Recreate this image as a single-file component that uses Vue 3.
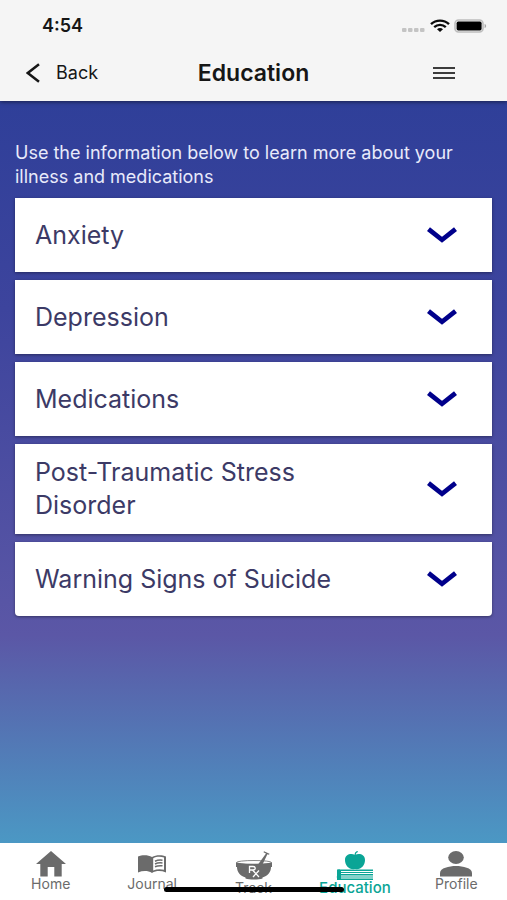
<script setup>
import { ref } from 'vue'

const topics = [
    { id: 'anxiety', title: 'Anxiety' },
    { id: 'depression', title: 'Depression' },
    { id: 'medications', title: 'Medications' },
    { id: 'ptsd', title: 'Post-Traumatic Stress Disorder' },
    { id: 'suicide', title: 'Warning Signs of Suicide' }
]

const tabs = [
    { id: 'home', label: 'Home' },
    { id: 'journal', label: 'Journal' },
    { id: 'track', label: 'Track' },
    { id: 'education', label: 'Education' },
    { id: 'profile', label: 'Profile' }
]

const activeTab = ref('education')
const openTopic = ref(null)

function toggleTopic(id) {
    openTopic.value = openTopic.value === id ? null : id
}
</script>

<template>
    <div class="app">
        <header class="header">
            <div class="status">
                <span class="time">4:54</span>
                <div class="status-icons" aria-hidden="true">
                    <svg width="24" height="14" viewBox="0 0 24 14" fill="#c4c4c4">
                        <rect x="0" y="9" width="4.5" height="4" rx="1" />
                        <rect x="6" y="9" width="4.5" height="4" rx="1" />
                        <rect x="12" y="9" width="4.5" height="4" rx="1" />
                        <rect x="18" y="9" width="4.5" height="4" rx="1" />
                    </svg>
                    <svg width="20" height="14" viewBox="0 0 20 14" fill="none" stroke="#0a0a0a">
                        <path d="M1 5.2C6 .4 14 .4 19 5.2" stroke-width="2.4" />
                        <path d="M4.2 8.2C7.4 5.2 12.6 5.2 15.8 8.2" stroke-width="2.3" />
                        <path d="M7 10.2C8.8 8.6 11.2 8.6 13 10.2L10 13z" fill="#0a0a0a" stroke="none" />
                    </svg>
                    <svg width="33" height="14" viewBox="0 0 33 14">
                        <rect x="1" y="1" width="28" height="12" rx="3.5" fill="#f5f5f5" stroke="#bdbdbd" stroke-width="1.6" />
                        <rect x="2.6" y="2.6" width="25" height="8.8" rx="1.6" fill="#000" />
                        <path d="M30.6 5v4c2-.5 2-3.5 0-4z" fill="#a8a8a8" />
                    </svg>
                </div>
            </div>
            <div class="toolbar">
                <button type="button" class="back">
                    <svg width="14" height="20" viewBox="0 0 14 20" fill="none" stroke="#161616" stroke-width="2.5"
                        aria-hidden="true">
                        <path d="M13 1.2L1.8 10L13 18.8" />
                    </svg>
                    Back
                </button>
                <h1>Education</h1>
                <button type="button" class="menu" aria-label="Menu">
                    <svg width="22" height="14" viewBox="0 0 22 14" stroke="#3c3c3c" stroke-width="2" aria-hidden="true">
                        <path d="M0 2h22M0 7h22M0 12h22" />
                    </svg>
                </button>
            </div>
        </header>

        <main class="content">
            <p class="intro">Use the information below to learn more about your illness and medications</p>
            <div class="topics">
                <button v-for="topic in topics" :key="topic.id" type="button" class="topic"
                    :class="{ open: openTopic === topic.id }" :aria-expanded="openTopic === topic.id"
                    @click="toggleTopic(topic.id)">
                    <span class="topic-title">{{ topic.title }}</span>
                    <svg class="chevron" width="30" height="16" viewBox="0 0 30 16" fill="none" stroke="#00008b"
                        stroke-width="4.8" aria-hidden="true">
                        <path d="M1.5 2.2L15 12.8L28.5 2.2" />
                    </svg>
                </button>
            </div>
        </main>

        <nav class="tabs" aria-label="Main">
            <a v-for="tab in tabs" :key="tab.id" :href="`#${tab.id}`" class="tab"
                :class="[tab.id, { active: activeTab === tab.id }]"
                :aria-current="activeTab === tab.id ? 'page' : undefined" @click="activeTab = tab.id">
                <svg v-if="tab.id === 'home'" width="30" height="26" viewBox="0 0 30 26" fill="currentColor"
                    aria-hidden="true">
                    <path d="M15 0L30 13H25.7V25.5H18.3V16H11.7V25.5H4.3V13H0z" />
                </svg>
                <svg v-else-if="tab.id === 'journal'" width="28" height="18" viewBox="0 0 28 18" aria-hidden="true">
                    <path d="M0 1.5C4-.4 10-.4 14 2C18-.4 24-.4 28 1.5V17.5C23 15.5 18 15.5 14 18C10 15.5 5 15.5 0 17.5z"
                        fill="currentColor" />
                    <path d="M15.2 3.2C18.5 1.6 22.5 1.5 26 2.6V14.8C22.5 13.8 18.5 14 15.2 15.5z" fill="#fff" />
                    <path d="M17 6.2C19.5 5 22 4.9 24.5 5.2M17 9C19.5 7.8 22 7.7 24.5 8M17 11.8C19.5 10.6 22 10.5 24.5 10.8"
                        fill="none" stroke="currentColor" stroke-width="1.5" />
                </svg>
                <svg v-else-if="tab.id === 'track'" width="38" height="30" viewBox="0 0 38 30" aria-hidden="true">
                    <ellipse cx="19" cy="11.5" rx="17.5" ry="2" fill="#fff" stroke="currentColor" stroke-width=".8" />
                    <path d="M23 13.5L31 2.6L28.5 1.3L29 .3L34.5 2.7L34 3.8L32.4 3.3L27.5 13.5z" fill="currentColor" />
                    <path d="M1 11.5C7 13.3 31 13.3 37 11.5V16H36C36 21.5 32.5 25 27.5 26.5V27.5C24 28.8 14 28.8 10.5 27.5V26.5C5.5 25 2 21.5 2 16H1z"
                        fill="currentColor" />
                    <path d="M14.5 22V15.5H18C21 15.5 21 19 18 19H14.5M17.5 19L24 26M24 19.5L18 26" fill="none"
                        stroke="#fff" stroke-width="1.3" />
                </svg>
                <svg v-else-if="tab.id === 'education'" width="38" height="30" viewBox="0 0 38 30" aria-hidden="true">
                    <path d="M19 4C23 1.8 29 3.5 29 9C29 14.5 25 19 19 18C13 19 9 14.5 9 9C9 3.5 15 1.8 19 4z"
                        fill="currentColor" />
                    <path d="M19.2 4C19 2.5 20 1 21.7.4" fill="none" stroke="currentColor" stroke-width="1.3" />
                    <path d="M37 18.5H2.5C.8 18.5.8 22.5 1.5 23.5C.3 25 .8 29 2.5 29H37V27.5H5V24.5H37V23H5V20H37z"
                        fill="currentColor" />
                    <path d="M5 21.5H37M5 26H37" stroke="currentColor" stroke-width="1" />
                    <path d="M1 18.5h3v10.5h-3z" fill="currentColor" />
                </svg>
                <svg v-else width="32" height="26" viewBox="0 0 32 26" fill="currentColor" aria-hidden="true">
                    <ellipse cx="16" cy="6.5" rx="7.8" ry="6.5" />
                    <path d="M0 25.5V22C0 17 9 15 16 15S32 17 32 22V25.5z" />
                </svg>
                <span>{{ tab.label }}</span>
            </a>
            <div class="home-indicator" aria-hidden="true" />
        </nav>
    </div>
</template>

<style>
body {
    margin: 0;
}
</style>

<style scoped>
.app {
    display: flex;
    flex-direction: column;
    min-height: 100vh;
    font-family: Inter, Roboto, sans-serif;
    color: #161616;
    background: #fff;
}

button {
    border: none;
    background: transparent;
    font: inherit;
    color: inherit;
    cursor: pointer;
}

.header {
    background: #f5f5f5;
    position: relative;
    box-shadow: 0 1px 4px rgba(0, 0, 0, 0.5);
}

.status {
    display: flex;
    align-items: center;
    justify-content: space-between;
    padding: 16px 20px 0 42px;
}

.time {
    font-size: 18px;
    line-height: 20px;
    font-weight: 600;
}

.status-icons {
    display: flex;
    align-items: center;
    gap: 4px;
}

.toolbar {
    display: grid;
    grid-template-columns: 1fr auto 1fr;
    align-items: center;
    height: 57px;
    padding: 8px 26px 0;
}

.back {
    display: flex;
    align-items: center;
    gap: 16px;
    justify-self: start;
    padding: 0;
    font-size: 18px;
}

.toolbar h1 {
    margin: 0;
    font-size: 23px;
    line-height: 28px;
    font-weight: 600;
}

.menu {
    display: flex;
    justify-self: end;
    margin-right: 26px;
    padding: 0;
}

.content {
    flex: 1;
    padding: 40px 15px 24px;
    background: linear-gradient(180deg, #2f3f99 0%, #3d449d 28%, #5b57a6 72%, #4b98c4 100%);
}

.intro {
    margin: 0 0 9px;
    color: #e8eafa;
    font-size: 18px;
    line-height: 24px;
}

.topics {
    display: flex;
    flex-direction: column;
    gap: 8px;
}

.topic {
    display: flex;
    align-items: center;
    justify-content: space-between;
    gap: 64px;
    min-height: 74px;
    padding: 12px 35px 12px 20px;
    background: #fff;
    color: #3c3a66;
    text-align: left;
    font-size: 25px;
    line-height: 33px;
    box-shadow: 0 1px 3px rgba(0, 0, 0, 0.4);
}

.topic:last-child {
    border-radius: 0 0 4px 4px;
}

.chevron {
    flex-shrink: 0;
}

.topic.open .chevron {
    transform: rotate(180deg);
}

.tabs {
    display: flex;
    position: relative;
    height: 57px;
    overflow: hidden;
}

.tab {
    flex: 1 1 0;
    min-width: 0;
    display: flex;
    flex-direction: column;
    align-items: center;
    padding-top: 8px;
    color: #6b6b6b;
    font-size: 14px;
    line-height: 14px;
    text-decoration: none;
}

.tab.journal {
    padding-top: 12px;
    gap: 4px;
}

.tab.active {
    color: #0aa596;
    font-size: 15px;
    font-weight: 500;
}

.home-indicator {
    position: absolute;
    bottom: 8px;
    left: 50%;
    width: 180px;
    height: 5px;
    border-radius: 3px;
    background: #000;
    transform: translateX(-50%);
}
</style>
